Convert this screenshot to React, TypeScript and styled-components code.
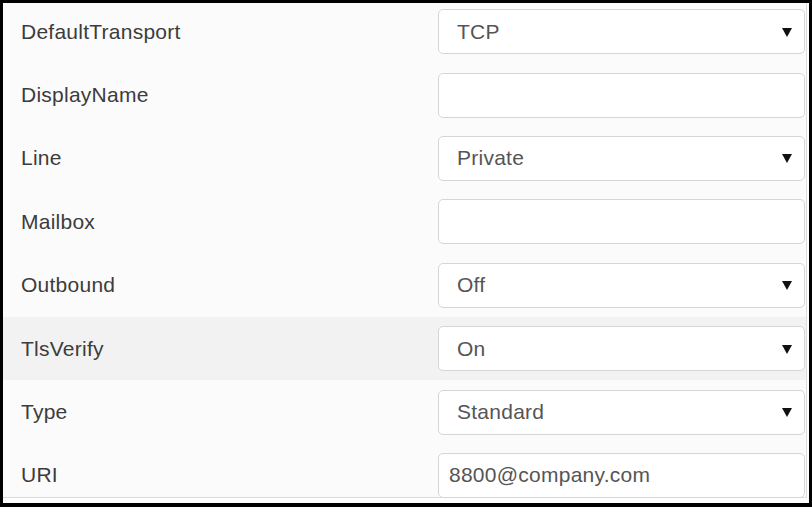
import React from "react";
import styled, { createGlobalStyle } from "styled-components";

const Global = createGlobalStyle`
  html, body { margin: 0; padding: 0; background: #ffffff; }
  * { box-sizing: border-box; }
`;

const Frame = styled.div`
  width: 812px;
  height: 507px;
  border: 3px solid #000;
  border-bottom-width: 4px;
  background: #ffffff;
  overflow: hidden;
`;

const Panel = styled.div`
  width: 804px;
  height: 498px;
  margin-top: -3px;
  background: #fbfbfb;
  border-right: 1px solid #dcdcdc;
  border-bottom: 1px solid #dcdcdc;
  display: flex;
  flex-direction: column;
`;

const Row = styled.div<{ $shade?: boolean }>`
  height: 63.4px;
  flex: none;
  display: grid;
  grid-template-columns: 1fr 367px;
  align-items: center;
  padding: 0 1px 0 18px;
  background: ${(p) => (p.$shade ? "#f2f2f2" : "transparent")};
`;

const Label = styled.div`
  font-family: "Liberation Sans", Arial, Helvetica, sans-serif;
  font-size: 21px;
  color: #3c3c3c;
  letter-spacing: 0.25px;
`;

const fieldBase = `
  height: 45px;
  width: 100%;
  border: 1px solid #d6d6d6;
  border-radius: 5px;
  background: #ffffff;
  font-family: "Liberation Sans", Arial, Helvetica, sans-serif;
  font-size: 21px;
  letter-spacing: 0.25px;
  color: #555555;
  padding: 0 12px 0 18px;
`;

const SelectBox = styled.div`
  ${fieldBase}
  display: flex;
  align-items: center;
  justify-content: space-between;
`;

const TextInput = styled.input`
  ${fieldBase}
  outline: none;
  display: block;
  padding-left: 10px;
`;

const Arrow = () => (
  <svg width="10" height="9" viewBox="0 0 10 9" style={{ marginTop: 1 }}>
    <path d="M0 0 H10 L5 9 Z" fill="#111" />
  </svg>
);

type Field = { label: string; kind: "select" | "text"; value: string; shade?: boolean };

const fields: Field[] = [
  { label: "DefaultTransport", kind: "select", value: "TCP" },
  { label: "DisplayName", kind: "text", value: "" },
  { label: "Line", kind: "select", value: "Private" },
  { label: "Mailbox", kind: "text", value: "" },
  { label: "Outbound", kind: "select", value: "Off" },
  { label: "TlsVerify", kind: "select", value: "On", shade: true },
  { label: "Type", kind: "select", value: "Standard" },
  { label: "URI", kind: "text", value: "8800@company.com" },
];

export default function App() {
  return (
    <>
      <Global />
      <Frame>
        <Panel>
          {fields.map((f) => (
            <Row key={f.label} $shade={f.shade}>
              <Label>{f.label}</Label>
              {f.kind === "select" ? (
                <SelectBox>
                  <span>{f.value}</span>
                  <Arrow />
                </SelectBox>
              ) : (
                <TextInput readOnly value={f.value} />
              )}
            </Row>
          ))}
        </Panel>
      </Frame>
    </>
  );
}
